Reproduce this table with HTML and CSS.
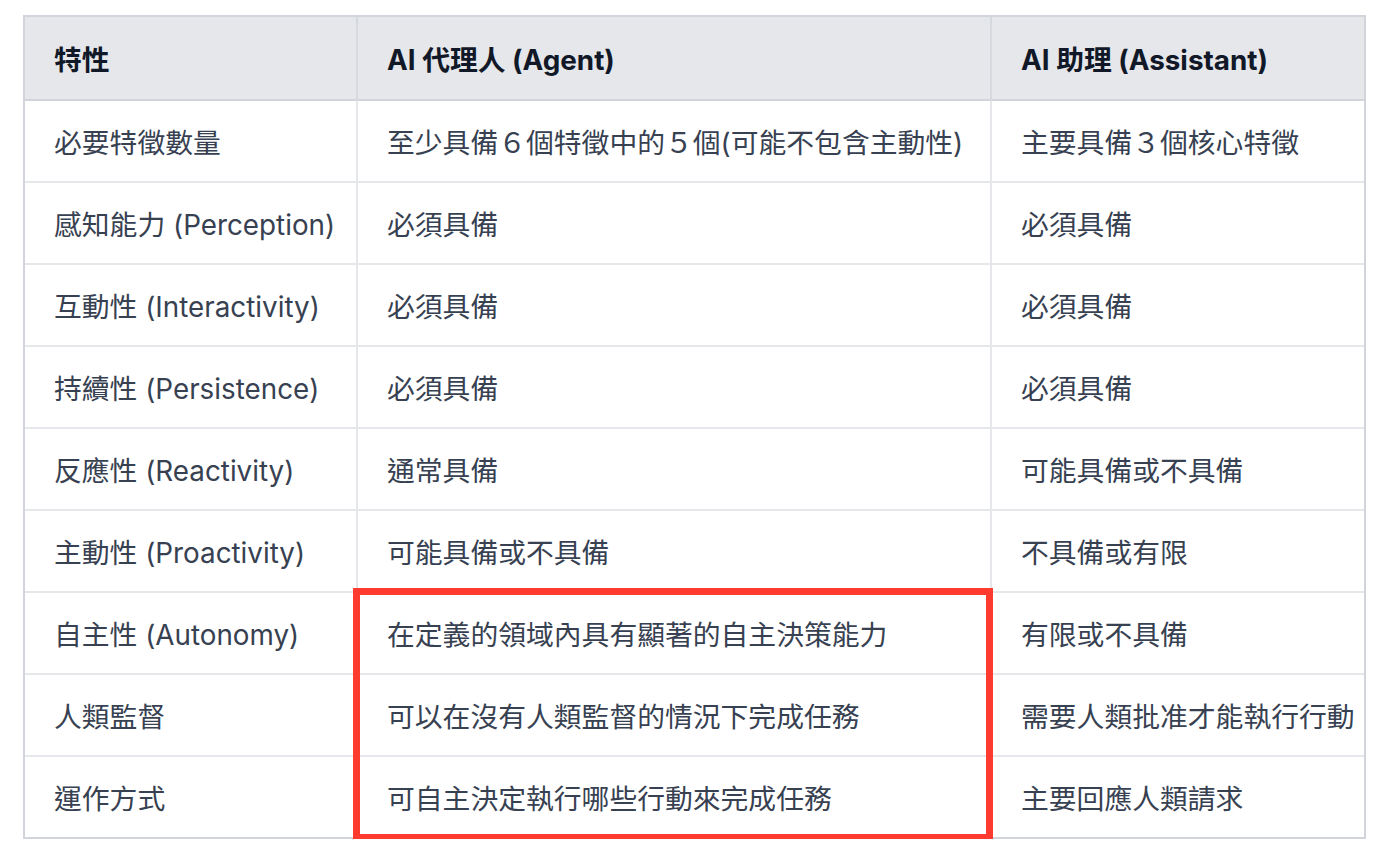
FILE: index.html
```html
<!DOCTYPE html>
<html lang="zh-Hant">
<head>
<meta charset="utf-8">
<link rel="stylesheet" href="styles.css">
</head>
<body>
<div class="wrap">
  <table class="cmp">
    <thead>
      <tr><th class="c1">特性</th><th class="c2">AI 代理人 (Agent)</th><th class="c3">AI 助理 (Assistant)</th></tr>
    </thead>
    <tbody>
      <tr><td>必要特徵數量</td><td>至少具備６個特徵中的５個(可能不包含主動性)</td><td>主要具備３個核心特徵</td></tr>
      <tr><td>感知能力 (Perception)</td><td>必須具備</td><td>必須具備</td></tr>
      <tr><td>互動性 (Interactivity)</td><td>必須具備</td><td>必須具備</td></tr>
      <tr><td>持續性 (Persistence)</td><td>必須具備</td><td>必須具備</td></tr>
      <tr><td>反應性 (Reactivity)</td><td>通常具備</td><td>可能具備或不具備</td></tr>
      <tr><td>主動性 (Proactivity)</td><td>可能具備或不具備</td><td>不具備或有限</td></tr>
      <tr><td>自主性 (Autonomy)</td><td>在定義的領域內具有顯著的自主決策能力</td><td>有限或不具備</td></tr>
      <tr><td>人類監督</td><td>可以在沒有人類監督的情況下完成任務</td><td>需要人類批准才能執行行動</td></tr>
      <tr><td>運作方式</td><td>可自主決定執行哪些行動來完成任務</td><td>主要回應人類請求</td></tr>
    </tbody>
  </table>
  <div class="highlight"></div>
</div>
</body>
</html>
```
FILE: styles.css
```css
html, body {
  margin: 0;
  padding: 0;
  background: #ffffff;
}
body {
  font-family: Inter, "Noto Sans CJK TC", "Noto Sans", sans-serif;
}
.wrap {
  position: relative;
  padding: 15px 0 0 23px;
}
.cmp {
  border-collapse: separate;
  border-spacing: 0;
  border: 2px solid #d1d5db;
  width: 1343px;
  table-layout: fixed;
  font-size: 27.8px;
  color: #374151;
}
.cmp th, .cmp td {
  text-align: left;
  padding: 0 0 0 29px;
  border-right: 2px solid #e5e7eb;
  border-bottom: 2px solid #e5e7eb;
  white-space: nowrap;
  vertical-align: middle;
}
.cmp th:last-child, .cmp td:last-child {
  border-right: none;
}
.cmp tbody tr:last-child td {
  border-bottom: none;
}
.cmp th {
  background: #e5e7eb;
  color: #111827;
  font-weight: 700;
  height: 82px;
  border-bottom-color: #d1d5db;
  border-right-color: #d6d9de;
}
.cmp td {
  height: 80px;
}
.c1 { width: 302px; }
.c2 { width: 603px; }
.c3 { width: auto; }
.highlight {
  position: absolute;
  left: 353px;
  top: 588px;
  width: 640px;
  height: 253px;
  box-sizing: border-box;
  border: 7px solid #ff3b30;
  pointer-events: none;
}
```
